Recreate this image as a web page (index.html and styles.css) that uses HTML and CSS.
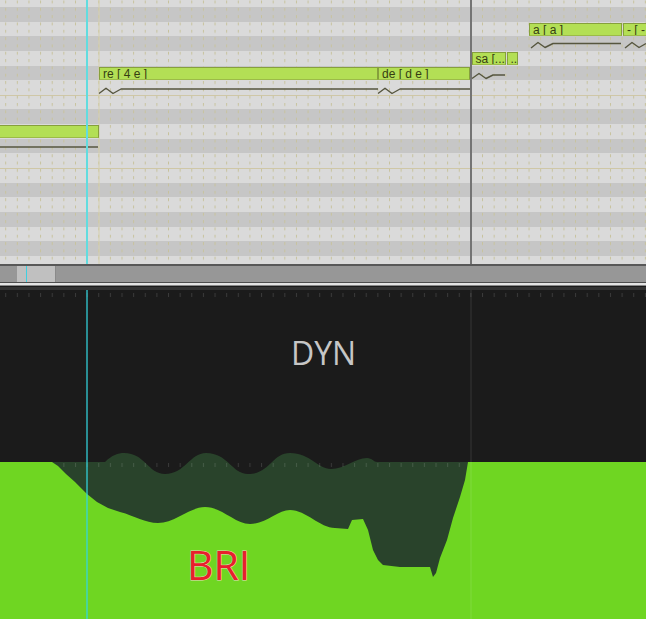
FILE: index.html
```html
<!DOCTYPE html>
<html lang="en">
<head>
<meta charset="utf-8">
<title>Piano roll</title>
<link rel="stylesheet" href="styles.css">
</head>
<body>
<div class="app">
  <div class="roll">
    <div class="rows">
      <div class="row w"></div>
      <div class="row b"></div>
      <div class="row w"></div>
      <div class="row b"></div>
      <div class="row w"></div>
      <div class="row b"></div>
      <div class="row w"></div>
      <div class="row w split"></div>
      <div class="row b"></div>
      <div class="row w"></div>
      <div class="row b"></div>
      <div class="row w"></div>
      <div class="row w split"></div>
      <div class="row b"></div>
      <div class="row w"></div>
      <div class="row b"></div>
      <div class="row w"></div>
      <div class="row b"></div>
      <div class="row w"></div>
    </div>
    <svg class="roll-overlay" width="646" height="264" viewBox="0 0 646 264">
      <defs>
        <pattern id="dots" x="5.2" y="0.5" width="11.63" height="7.32" patternUnits="userSpaceOnUse">
          <rect width="1" height="3" fill="#c7c29d"/>
        </pattern>
      </defs>
      <rect width="646" height="264" fill="url(#dots)"/>
      <rect x="98.5" y="0" width="1" height="264" fill="#d6cfae"/>
      <rect x="470" y="0" width="2" height="264" fill="#747474"/>
      <g class="pitch" fill="none" stroke="#56563f" stroke-width="1.4" stroke-linejoin="round">
        <path d="M0,147 L98,147"/>
        <path d="M99,93.5 L106,88.3 L113,93.5 L121,89 L378,89"/>
        <path d="M378,93.5 L385,88.3 L392,93.5 L400,89 L470,89"/>
        <path d="M472,78.5 L479,73.5 L486,78.5 L493,75 L505,75"/>
        <path d="M531,48 L538,42.5 L545,47.5 L553,43.5 L621,43.5"/>
        <path d="M625,48 L632,42.5 L639,47.5 L646,43.5"/>
      </g>
    </svg>
    <div class="note" style="left:-2px;top:125.2px;width:101px;"></div>
    <div class="note" style="left:99px;top:66.6px;width:279px;">re [ 4 e ]</div>
    <div class="note" style="left:378px;top:66.6px;width:92px;">de [ d e ]</div>
    <div class="note" style="left:471.5px;top:51.9px;width:34px;">sa [...</div>
    <div class="note" style="left:506.5px;top:51.9px;width:11px;">..</div>
    <div class="note" style="left:529px;top:22.6px;width:92.5px;">a [ a ]</div>
    <div class="note" style="left:623px;top:22.6px;width:40px;">- [ -</div>
    <div class="playhead"></div>
  </div>
  <div class="scrollbar">
    <div class="thumb"><span class="thumb-mark"></span></div>
  </div>
  <div class="sep"></div>
  <div class="lanes">
    <svg class="lane-graph" width="646" height="329" viewBox="0 290 646 329">
      <defs>
        <pattern id="ticks" x="5.2" y="293" width="11.63" height="4" patternUnits="userSpaceOnUse">
          <rect width="1" height="4" fill="#3a3a3a"/>
        </pattern>
        <pattern id="ticks2" x="5.2" y="463" width="11.63" height="4" patternUnits="userSpaceOnUse">
          <rect width="1" height="4" fill="rgba(255,255,255,0.13)"/>
        </pattern>
      </defs>
      <rect x="0" y="293" width="646" height="4" fill="url(#ticks)"/>
      <path fill="#29432b" d="M52,462 L105,462 C112,455 118,453 124,453 C145,453 148,474 165,474 C185,474 190,453 206,453 C228,453 232,474 248,474 C270,474 272,453 290,453 C310,453 318,469 331,469 C345,469 355,458 367,458 C372,458 374,462 377,462 L470,462 L470,619 L52,619 Z"/>
      <rect x="52" y="463" width="418" height="4" fill="url(#ticks2)"/>
      <path fill="#6fd622" d="M0,619 L0,462 L52,462 L58,466 L66,474 L75,482 L87,494 L97,502 L108,508 L120,512 C135,516 145,523 158,523 C175,523 190,507 205,507 C222,507 235,524 250,524 C266,524 278,510 290,510 C306,510 320,528 335,528 L348,529 L352,520 L363,519 L368,530 L373,550 L378,560 L383,565 L400,567 L430,567 L433,577 L436,573 L440,558 L447,540 L453,518 L460,497 L465,480 L468,462 L646,462 L646,619 Z"/>
      <rect x="470.5" y="290" width="1" height="329" fill="rgba(255,255,255,0.12)"/>
      <rect x="86" y="290" width="2" height="329" fill="rgba(50,215,225,0.62)"/>
    </svg>
    <span class="lane-label dyn">DYN</span>
    <span class="lane-label bri">BRI</span>
  </div>
</div>
</body>
</html>
```
FILE: styles.css
```css
html, body {
  margin: 0;
  padding: 0;
  background: #1b1b1b;
  overflow: hidden;
}

.app {
  width: 646px;
  height: 619px;
  display: flex;
  flex-direction: column;
  overflow: hidden;
  font-family: "Liberation Sans", Arial, sans-serif;
}

.roll {
  position: relative;
  height: 264px;
  flex: none;
  overflow: hidden;
  background: #dadada;
}

.rows {
  display: flex;
  flex-direction: column;
  margin-top: -7.65px;
}

.row {
  height: 14.65px;
  flex: none;
}

.row.w {
  background: #dadada;
}

.row.b {
  background: #c6c6c6;
}

.row.split {
  box-shadow: inset 0 1px 0 #cfc7a7;
}

.roll-overlay {
  position: absolute;
  left: 0;
  top: 0;
  display: block;
}

.note {
  position: absolute;
  height: 13px;
  box-sizing: border-box;
  background: #b3df55;
  border: 1px solid #86a03c;
  border-bottom-color: #9cbb48;
  color: #363d12;
  font-size: 12px;
  line-height: 12.5px;
  padding-left: 3px;
  white-space: nowrap;
  overflow: hidden;
}

.playhead {
  position: absolute;
  left: 86px;
  top: 0;
  width: 2px;
  height: 100%;
  background: #62dcdf;
}

.scrollbar {
  flex: none;
  height: 16px;
  border-top: 2px solid #585858;
  border-bottom: 1px solid #4e4e4e;
  background: #979797;
  display: flex;
  padding-left: 17px;
}

.thumb {
  width: 38px;
  height: 16px;
  background: #c0c0c0;
  border-right: 1px solid #8a8a8a;
  position: relative;
}

.thumb-mark {
  position: absolute;
  left: 9px;
  top: 0;
  width: 1px;
  height: 16px;
  background: #3fcfe0;
}

.sep {
  flex: none;
  height: 2px;
  background: #e4e4e4;
  border-bottom: 1px solid #8a8a8a;
  box-shadow: 0 4px 0 #333;
  margin-bottom: 4px;
}

.lanes {
  position: relative;
  flex: 1;
  background: #1b1b1b;
}

.lane-graph {
  display: block;
}

.lane-label {
  position: absolute;
  font-family: "Open Sans", "Liberation Sans", sans-serif;
  line-height: 1;
  white-space: nowrap;
}

.dyn {
  left: 291px;
  top: 47px;
  font-size: 32px;
  color: #c6c6c6;
}

.bri {
  left: 187px;
  top: 254px;
  font-size: 41px;
  color: #e8202c;
  -webkit-text-stroke: 1px rgba(255, 215, 215, 0.85);
  paint-order: stroke fill;
}
```
